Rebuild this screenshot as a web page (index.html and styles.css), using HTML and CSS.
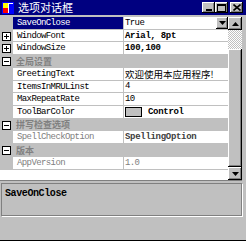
FILE: index.html
```html
<!DOCTYPE html>
<html lang="zh-CN">
<head>
  <meta charset="UTF-8">
  <title>选项对话框</title>
  <link rel="stylesheet" href="styles.css">
</head>
<body>
  <div class="window">
    <div class="titlebar">
      <svg class="app-icon" width="12" height="12" viewBox="0 0 12 12">
        <rect x="0.5" y="0.5" width="11" height="11" fill="#fff" stroke="#0000ff"/>
        <rect x="1" y="1" width="5" height="5" fill="#ffff00"/>
        <rect x="1" y="6" width="5" height="5" fill="#ff0000"/>
        <rect x="7" y="2" width="4" height="9" fill="#0000ff"/>
      </svg>
      <span class="title">选项对话框</span>
      <span class="tb-btn">
        <svg width="8" height="7" viewBox="0 0 8 7"><rect x="1" y="5" width="6" height="2" fill="#000"/></svg>
      </span>
      <span class="tb-btn">
        <svg width="9" height="8" viewBox="0 0 9 8"><rect x="0.5" y="0.5" width="8" height="7" fill="none" stroke="#000"/><rect x="0" y="0" width="9" height="2" fill="#000"/></svg>
      </span>
      <span class="tb-btn close">
        <svg width="8" height="7" viewBox="0 0 8 7"><path d="M0.5 0.5L7.5 6.5M7.5 0.5L0.5 6.5" stroke="#000" stroke-width="1.6"/></svg>
      </span>
    </div>

    <div class="grid">
      <div class="rows">
        <div class="row">
          <div class="gutter"></div>
          <div class="name selected">SaveOnClose</div>
          <div class="value">True
            <span class="drop-btn">
              <svg width="7" height="4" viewBox="0 0 7 4"><path d="M0 0H7L3.5 4Z" fill="#000"/></svg>
            </span>
          </div>
        </div>
        <div class="row">
          <div class="gutter">
            <svg class="toggle" width="9" height="9" viewBox="0 0 9 9"><rect x="0.5" y="0.5" width="8" height="8" fill="#fff" stroke="#000"/><path d="M2 4.5H7M4.5 2V7" stroke="#000"/></svg>
          </div>
          <div class="name">WindowFont</div>
          <div class="value strong">Arial, 8pt</div>
        </div>
        <div class="row">
          <div class="gutter">
            <svg class="toggle" width="9" height="9" viewBox="0 0 9 9"><rect x="0.5" y="0.5" width="8" height="8" fill="#fff" stroke="#000"/><path d="M2 4.5H7M4.5 2V7" stroke="#000"/></svg>
          </div>
          <div class="name">WindowSize</div>
          <div class="value strong">100,100</div>
        </div>
        <div class="row category">
          <svg class="toggle" width="9" height="9" viewBox="0 0 9 9"><rect x="0.5" y="0.5" width="8" height="8" fill="#fff" stroke="#000"/><path d="M2 4.5H7" stroke="#000"/></svg>
          <span>全局设置</span>
        </div>
        <div class="row">
          <div class="gutter"></div>
          <div class="name">GreetingText</div>
          <div class="value cjk">欢迎使用本应用程序!</div>
        </div>
        <div class="row">
          <div class="gutter"></div>
          <div class="name">ItemsInMRULinst</div>
          <div class="value">4</div>
        </div>
        <div class="row">
          <div class="gutter"></div>
          <div class="name">MaxRepeatRate</div>
          <div class="value">10</div>
        </div>
        <div class="row">
          <div class="gutter"></div>
          <div class="name">ToolBarColor</div>
          <div class="value strong"><span class="swatch"></span>Control</div>
        </div>
        <div class="row category">
          <svg class="toggle" width="9" height="9" viewBox="0 0 9 9"><rect x="0.5" y="0.5" width="8" height="8" fill="#fff" stroke="#000"/><path d="M2 4.5H7" stroke="#000"/></svg>
          <span>拼写检查选项</span>
        </div>
        <div class="row">
          <div class="gutter"></div>
          <div class="name readonly">SpellCheckOption</div>
          <div class="value strong dim">SpellingOption</div>
        </div>
        <div class="row category">
          <svg class="toggle" width="9" height="9" viewBox="0 0 9 9"><rect x="0.5" y="0.5" width="8" height="8" fill="#fff" stroke="#000"/><path d="M2 4.5H7" stroke="#000"/></svg>
          <span>版本</span>
        </div>
        <div class="row">
          <div class="gutter"></div>
          <div class="name readonly">AppVersion</div>
          <div class="value readonly">1.0</div>
        </div>
      </div>

      <div class="scrollbar">
        <span class="sb-btn">
          <svg width="7" height="4" viewBox="0 0 7 4"><path d="M0 4H7L3.5 0Z" fill="#000"/></svg>
        </span>
        <div class="sb-track"></div>
        <div class="sb-thumb"></div>
        <span class="sb-btn">
          <svg width="7" height="4" viewBox="0 0 7 4"><path d="M0 0H7L3.5 4Z" fill="#000"/></svg>
        </span>
      </div>
    </div>

    <div class="desc">
      <b>SaveOnClose</b>
    </div>
  </div>
</body>
</html>
```

FILE: styles.css
```css
body {
  margin: 0;
  background-color: #c0c0c0;
  font-family: "Liberation Mono", "Noto Sans CJK SC", monospace;
  font-size: 9px;
  color: #000;
}

.window {
  width: 246px;
  height: 241px;
  box-sizing: border-box;
  border-bottom: 1px solid #000;
  display: flex;
  flex-direction: column;
}

/* title bar */
.titlebar {
  height: 15px;
  background-color: #000080;
  display: flex;
  align-items: center;
  padding: 0 3px 0 2px;
  color: #fff;
}

.title {
  font-family: "Noto Sans CJK SC", sans-serif;
  font-size: 11px;
  line-height: 15px;
  margin-left: 4px;
  flex: 1;
}

.tb-btn {
  width: 13px;
  height: 11px;
  background-color: #c0c0c0;
  box-shadow: inset -1px -1px #000, inset 1px 1px #fff, inset -2px -2px #808080;
  display: flex;
  align-items: center;
  justify-content: center;
}

.tb-btn.close {
  margin-left: 2px;
}

/* property grid */
.grid {
  margin-top: 2px;
  width: 242px;
  height: 163px;
  display: flex;
  background-color: #fff;
  border-bottom: 1px solid #808080;
}

.rows {
  flex: 1;
}

.row {
  display: flex;
  height: 12.73px;
  line-height: 12px;
}

.gutter {
  width: 13px;
  background-color: #c0c0c0;
  display: flex;
  align-items: center;
  justify-content: center;
}

.toggle {
  display: block;
}

.name {
  width: 106px;
  padding-left: 4px;
  letter-spacing: -0.6px;
  border-right: 1px solid #c0c0c0;
  border-bottom: 1px solid #c0c0c0;
  white-space: nowrap;
}

.name.selected {
  background-color: #000080;
  color: #fff;
}

.value {
  flex: 1;
  padding-left: 1px;
  letter-spacing: -0.6px;
  border-bottom: 1px solid #c0c0c0;
  display: flex;
  align-items: center;
  white-space: nowrap;
}

.value.strong {
  font-weight: bold;
  letter-spacing: -0.3px;
}

.value.cjk {
  font-family: "Noto Sans CJK SC", sans-serif;
  font-size: 9.5px;
  letter-spacing: 0;
}

.readonly {
  color: #808080;
}

.dim {
  color: #404040;
}

.drop-btn {
  margin-left: auto;
  width: 12px;
  height: 12px;
  background-color: #c0c0c0;
  box-shadow: inset -1px -1px #000, inset 1px 1px #fff, inset -2px -2px #808080;
  display: flex;
  align-items: center;
  justify-content: center;
}

.swatch {
  width: 15px;
  height: 8px;
  margin-right: 6px;
  background-color: #c0c0c0;
  border: 1px solid #000;
}

.row.category {
  background-color: #c0c0c0;
  color: #808080;
  font-family: "Noto Sans CJK SC", sans-serif;
  font-weight: bold;
  font-size: 9px;
  align-items: center;
  gap: 5px;
  padding-left: 2px;
}

/* scrollbar */
.scrollbar {
  width: 14px;
  display: flex;
  flex-direction: column;
}

.sb-btn {
  height: 13px;
  background-color: #c0c0c0;
  box-shadow: inset -1px -1px #000, inset 1px 1px #fff, inset -2px -2px #808080;
  display: flex;
  align-items: center;
  justify-content: center;
}

.sb-track {
  height: 19px;
  background: repeating-conic-gradient(#fff 0 25%, #c0c0c0 0 50%) 0 0 / 2px 2px;
}

.sb-thumb {
  flex: 1;
  background-color: #c0c0c0;
  box-shadow: inset -1px -1px #000, inset 1px 1px #fff, inset -2px -2px #808080;
}

/* description panel */
.desc {
  margin: 2px 4px 0 1px;
  height: 25px;
  padding: 4px 3px 2px;
  border: 1px solid #808080;
  box-shadow: 1px 1px 0 #fff;
  font-size: 10px;
  letter-spacing: -0.4px;
}
```
